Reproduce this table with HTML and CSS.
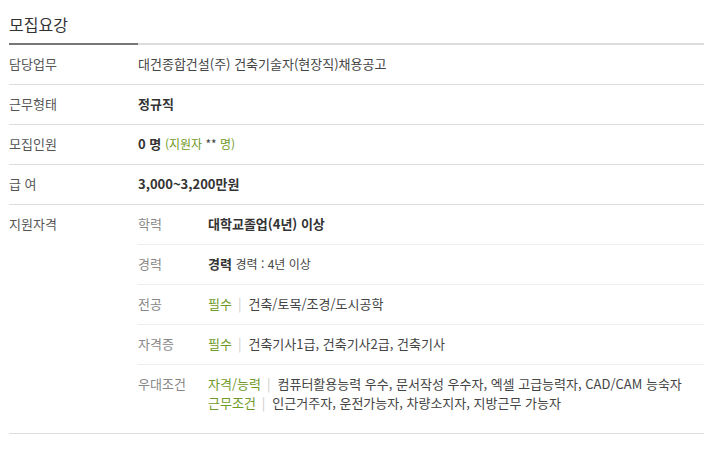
FILE: index.html
```html
<!DOCTYPE html>
<html lang="ko">
<head>
<meta charset="utf-8">
<link rel="stylesheet" href="styles.css">
</head>
<body>
<div class="wrap">
  <h2 class="title">모집요강</h2>
  <div class="rule"><span class="rule-dark"></span><span class="rule-light"></span></div>
  <div class="row">
    <div class="label">담당업무</div>
    <div class="value">대건종합건설(주) 건축기술자(현장직)채용공고</div>
  </div>
  <div class="row">
    <div class="label">근무형태</div>
    <div class="value"><strong>정규직</strong></div>
  </div>
  <div class="row">
    <div class="label">모집인원</div>
    <div class="value"><strong>0 명</strong> <span class="green small">(지원자 <span class="dark">**</span> 명)</span></div>
  </div>
  <div class="row">
    <div class="label">급 여</div>
    <div class="value"><strong>3,000~3,200만원</strong></div>
  </div>
  <div class="row row-qual">
    <div class="label">지원자격</div>
    <div class="subs">
      <div class="subrow">
        <div class="sublabel">학력</div>
        <div class="subvalue"><strong>대학교졸업(4년) 이상</strong></div>
      </div>
      <div class="subrow">
        <div class="sublabel">경력</div>
        <div class="subvalue"><strong>경력</strong> <span class="small">경력 : 4년 이상</span></div>
      </div>
      <div class="subrow">
        <div class="sublabel">전공</div>
        <div class="subvalue"><span class="green">필수</span><span class="sep">|</span>건축/토목/조경/도시공학</div>
      </div>
      <div class="subrow">
        <div class="sublabel">자격증</div>
        <div class="subvalue"><span class="green">필수</span><span class="sep">|</span>건축기사1급, 건축기사2급, 건축기사</div>
      </div>
      <div class="subrow subrow-last">
        <div class="sublabel">우대조건</div>
        <div class="subvalue">
          <div class="line"><span class="green">자격/능력</span><span class="sep">|</span>컴퓨터활용능력 우수, 문서작성 우수자, 엑셀 고급능력자, CAD/CAM 능숙자</div>
          <div class="line"><span class="green">근무조건</span><span class="sep">|</span>인근거주자, 운전가능자, 차량소지자, 지방근무 가능자</div>
        </div>
      </div>
    </div>
  </div>
</div>
</body>
</html>
```
FILE: styles.css
```css
* { box-sizing: border-box; }
body {
  margin: 0;
  background: #fff;
  font-family: "Noto Sans CJK KR", "Noto Sans", sans-serif;
  font-size: 13px;
  color: #444;
}
.wrap {
  margin-left: 9px;
  width: 695px;
}
.title {
  margin: 0;
  padding-top: 14px;
  height: 43px;
  font-size: 16px;
  line-height: 20px;
  font-weight: normal;
  color: #333;
}
.rule {
  display: flex;
  height: 2px;
}
.rule-dark { width: 129px; background: #777; }
.rule-light { flex: 1; background: #ddd; }
.row {
  display: flex;
  border-bottom: 1px solid #ddd;
}
.label, .value, .sublabel, .subvalue, .line {
  line-height: 19px;
}
.label, .value, .sublabel, .subvalue {
  padding: 9px 0 11px;
}
.label {
  width: 129px;
  flex: none;
  color: #555;
}
.value, .subvalue {
  height: 39px;
  color: #444;
  white-space: nowrap;
}
strong { font-weight: bold; color: #333; }
.small { font-size: 12px; line-height: 1; }
.green { color: #6f9a26; }
.dark { color: #444; }
.subs { flex: 1; }
.subrow {
  display: flex;
  border-bottom: 1px solid #eee;
}
.subrow-last {
  border-bottom: none;
  padding-bottom: 10px;
}
.subrow-last .subvalue { height: auto; }
.line { height: 19px; }
.sublabel {
  width: 70px;
  flex: none;
  color: #888;
}
.sep {
  color: #ccc;
  margin: 0 7px 0 6px;
}
```
